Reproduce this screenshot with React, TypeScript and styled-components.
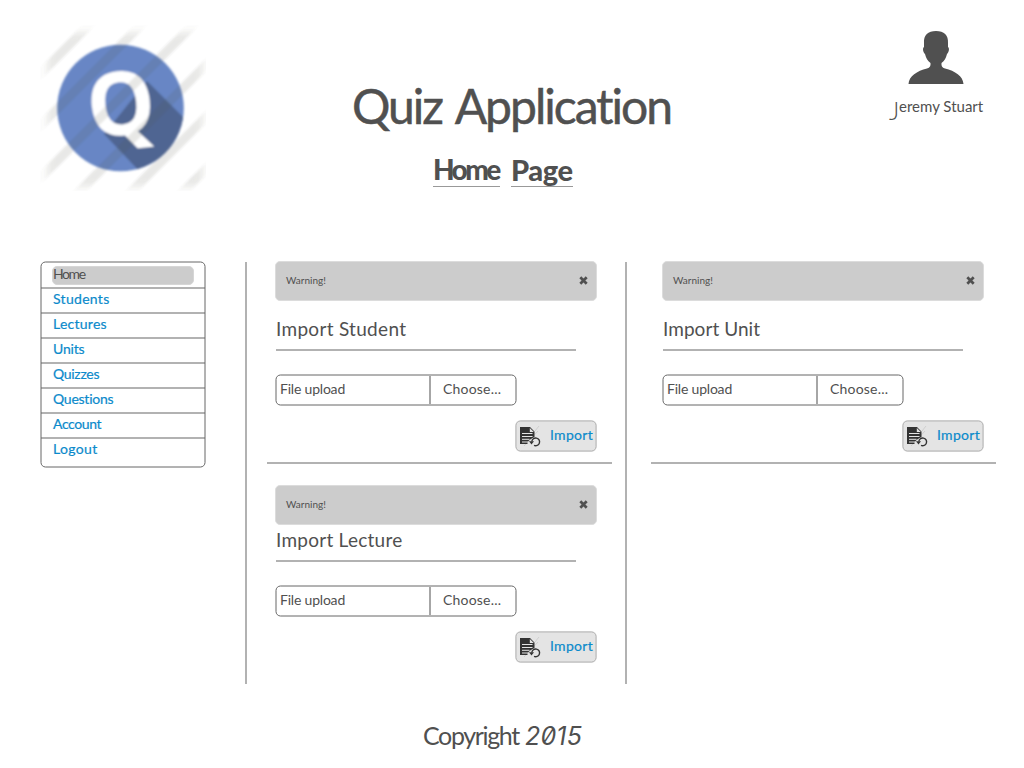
import React from 'react';
import styled, { createGlobalStyle, css } from 'styled-components';

const ink = '#505050';
const line = '#b2b2b2';
const link = '#0b8acb';

const GlobalStyle = createGlobalStyle`
  *, *::before { box-sizing: border-box; }
  body { margin: 0; background: #fff; color: ${ink}; font-family: Lato, "Open Sans", sans-serif; }
  h1, h2, h3, p, ul { margin: 0; padding: 0; font-weight: 400; }
  button { font: inherit; color: inherit; margin: 0; padding: 0; background: none; border: 0; }
`;

const hairline = (color: string) => css`
  position: relative;
  &::before {
    content: '';
    position: absolute;
    top: 0;
    left: 0;
    width: calc(100% - 1px);
    height: calc(100% - 1px);
    border: 1px solid ${color};
    border-radius: 5px;
    transform: translate(0.5px, 0.5px);
    pointer-events: none;
  }
`;

const Page = styled.div`
  width: 1024px;
  height: 768px;
  display: flex;
  flex-direction: column;
  overflow: hidden;
`;

const Header = styled.header`
  height: 261px;
  display: grid;
  grid-template-columns: 352px 1fr 134px;
  align-items: start;
`;

const LogoBox = styled.div`
  padding: 25px 0 0 40px;
  svg { display: block; }
`;

const Titles = styled.div`
  padding-top: 76px;
`;

const AppTitle = styled.h1`
  font-size: 48px;
  line-height: 60px;
  letter-spacing: -2px;
  word-spacing: 4px;
  -webkit-text-stroke: 0.5px ${ink};
  white-space: nowrap;
`;

const PageTitle = styled.h2`
  display: flex;
  gap: 11px;
  margin: 17px 0 0 81px;
  font-size: 29px;
  line-height: 33px;
  font-weight: 900;
`;

const Word = styled.span<{ $width: number; $spacing: number; $size: number }>`
  width: ${p => p.$width}px;
  height: 34px;
  font-size: ${p => p.$size}px;
  letter-spacing: ${p => p.$spacing}px;
  white-space: nowrap;
  border-bottom: 1px solid #999;
`;

const User = styled.div`
  padding: 30px 0 0;
  display: flex;
  flex-direction: column;
  svg { display: block; margin-left: 18px; }
`;

const UserName = styled.p`
  margin-top: 10px;
  height: 28px;
  display: flex;
  line-height: 24px;
  font-size: 15px;
  letter-spacing: 0;
  white-space: nowrap;
`;

const Initial = styled.span`
  width: 9px;
  margin-top: 4px;
  font-size: 25px;
  line-height: 24px;
  font-weight: 300;
  text-indent: -1px;
`;

const Main = styled.main`
  height: 423px;
  display: flex;
  padding-left: 40px;
`;

const Nav = styled.ul`
  ${hairline('#666')}
  width: 166px;
  height: 207px;
  margin-right: 39px;
  padding: 2px 1px;
  list-style: none;
`;

const NavItem = styled.li`
  height: 25px;
  padding: 0 11px 0 12px;
  border-bottom: 2px solid ${line};
  color: ${link};
  font-size: 14px;
  line-height: 20px;
  -webkit-text-stroke: 0.2px ${link};
  &:first-child { height: 26px; padding: 3px 11px 0; -webkit-text-stroke: 0; }
  &:last-child { border-bottom: 0; }
`;

const NavLabel = styled.span<{ $spacing: number }>`
  display: block;
  letter-spacing: ${p => p.$spacing}px;
`;

const Current = styled(NavLabel)`
  width: 142px;
  height: 19px;
  border: 1px solid #d6d6d6;
  border-radius: 5px;
  background: #ccc;
  color: ${ink};
  line-height: 14px;
`;

const Divider = styled.div`
  width: 2px;
  margin-top: 1px;
  background: ${line};
`;

const Column = styled.div<{ $left: number }>`
  width: 378px;
  padding-left: ${p => p.$left}px;
  flex: none;
`;

const Panel = styled.section`
  width: 322px;
`;

const Separator = styled.div<{ $shift: number }>`
  width: 345px;
  height: 2px;
  margin: 10px 0 21px -${p => p.$shift}px;
  background: ${line};
`;

const Alert = styled.div`
  height: 40px;
  display: flex;
  align-items: center;
  justify-content: space-between;
  padding: 0 8px 3px 10px;
  border: 1px solid #dcdcdc;
  border-radius: 5px;
  background: #ccc;
  font-size: 10px;
  svg { display: block; margin-top: 2px; }
`;

const PanelTitle = styled.h3<{ $height: number; $spacing: number }>`
  width: 300px;
  height: ${p => p.$height}px;
  margin-left: 1px;
  padding-bottom: 5px;
  display: flex;
  align-items: flex-end;
  border-bottom: 2px solid ${line};
  font-size: 19px;
  line-height: 30px;
  letter-spacing: ${p => p.$spacing}px;
`;

const Upload = styled.div`
  ${hairline('#666')}
  width: 242px;
  height: 32px;
  margin-top: 23px;
  padding: 2px;
  display: flex;
  font-size: 14px;
  line-height: 26px;
`;

const FileName = styled.span`
  width: 154px;
  padding-left: 3px;
  border-right: 2px solid #a6a6a6;
  letter-spacing: -0.2px;
  margin-right: 12px;
`;

const Choose = styled.span`
  letter-spacing: 0.2px;
`;

const ImportButton = styled.button`
  ${hairline('#b5b5b5')}
  width: 82px;
  height: 32px;
  margin: 14px 0 0 240px;
  padding: 0 0 0 5px;
  display: flex;
  align-items: center;
  gap: 9px;
  border-radius: 6px;
  background: #e4e4e4;
  color: ${link};
  font-size: 14px;
  line-height: 24px;
  letter-spacing: 0.3px;
  -webkit-text-stroke: 0.2px ${link};
`;

const ButtonText = styled.span`
  padding-bottom: 3px;
`;

const Footer = styled.footer`
  padding: 35px 0 0 423px;
  font-size: 25px;
  line-height: 32px;
  letter-spacing: -1.35px;
  white-space: nowrap;
`;

const Year = styled.span`
  margin-left: 1px;
  font-family: Inter, sans-serif;
  font-feature-settings: "zero" 1;
  font-style: italic;
  font-size: 25px;
  letter-spacing: 0.2px;
`;

const Logo = () => (
  <svg width="166" height="166" viewBox="40 25 166 166">
    <defs>
      <filter id="soft" x="-5%" y="-5%" width="110%" height="110%"><feGaussianBlur stdDeviation="0.8" /></filter>
      <filter id="edge" x="-10%" y="-10%" width="120%" height="120%"><feGaussianBlur stdDeviation="4" /></filter>
      <mask id="fade"><rect x="46" y="31" width="156" height="155" fill="#fff" filter="url(#edge)" /></mask>
      <clipPath id="disc"><circle cx="120.5" cy="108" r="63.3" /></clipPath>
    </defs>
    <g filter="url(#soft)">
      <circle cx="120.5" cy="108" r="63.3" fill="#6786c5" />
      <path d="M147 81 L190 124 V175 H143 L104 134Z" fill="#4f6592" clipPath="url(#disc)" />
      <text x="120.8" y="135" textAnchor="middle" fontFamily="Open Sans" fontWeight="700" fontSize="88" textLength="68" lengthAdjust="spacingAndGlyphs" fill="#fff" transform="rotate(-6 120.5 104)">Q</text>
      <g transform="translate(1 1)" stroke="#5c5c50" strokeOpacity="0.14" strokeWidth="9" mask="url(#fade)">
        <path d="M33 79 L97 15" />
        <path d="M33 131 L149 15" />
        <path d="M33 183 L201 15" />
        <path d="M73 196 L216 53" />
        <path d="M125 196 L216 105" />
        <path d="M177 196 L216 157" />
      </g>
    </g>
  </svg>
);

const Avatar = () => (
  <svg width="56" height="54" viewBox="0 0 56 54" fill="#505050">
    <path d="M28 1 C20 1 15.5 5 16 13 L16 17 C14.3 18 15 22 17 24 C18 28 19.5 31 22.5 33 C22.8 36 22 37.5 19 38.5 C9 41 1 46 .5 54 H55.5 C55 46 47 41 37 38.5 C34 37.5 33.2 36 33.5 33 C36.5 31 38 28 39 24 C41 22 41.7 18 40 17 L40 13 C40.5 5 36 1 28 1Z" />
  </svg>
);

const CloseIcon = () => (
  <svg width="9" height="9" viewBox="0 0 9 9">
    <path d="M1.3 1.3 L7.7 7.7 M7.7 1.3 L1.3 7.7" stroke="#505050" strokeWidth="2.7" />
  </svg>
);

const DocumentIcon = () => (
  <svg width="21" height="21" viewBox="0 0 21 21">
    <path d="M19 0 L15 5 M18 5 L4 20" stroke="#cfcfcf" strokeWidth="1" />
    <path d="M0 1 H10 L14.5 5.5 V11 L10 13.5 L7.5 16 V18 H0Z" fill="#333" />
    <path d="M9.8 2 V6 H13.8Z" fill="#e4e4e4" />
    <path d="M2 7.5 H12.5 M2 10.5 H12.5 M2 13.3 H9.5 M2 16 H8" stroke="#e4e4e4" strokeWidth="1" />
    <path d="M11.8 15.5 A3.9 3.9 0 1 1 14 19.4" fill="none" stroke="#333" strokeWidth="1.4" />
    <path d="M9 15.2 H14 L11.5 18.6Z" fill="#333" />
  </svg>
);

const links: [string, number][] = [
  ['Students', 0.3], ['Lectures', 0.25], ['Units', -0.2], ['Quizzes', -0.3],
  ['Questions', -0.25], ['Account', -0.4], ['Logout', 0.35],
];

const ImportPanel = ({ title, height, spacing }: { title: string; height: number; spacing: number }) => (
  <Panel>
    <Alert><span>Warning!</span><CloseIcon /></Alert>
    <PanelTitle $height={height} $spacing={spacing}>{title}</PanelTitle>
    <Upload><FileName>File upload</FileName><Choose>Choose...</Choose></Upload>
    <ImportButton><DocumentIcon /><ButtonText>Import</ButtonText></ImportButton>
  </Panel>
);

export default function App() {
  return (
    <Page>
      <GlobalStyle />
      <Header>
        <LogoBox><Logo /></LogoBox>
        <Titles>
          <AppTitle>Quiz Application</AppTitle>
          <PageTitle>
            <Word $width={67} $spacing={-2.6} $size={28}>Home</Word>
            <Word $width={62} $spacing={-0.4} $size={29}>Page</Word>
          </PageTitle>
        </Titles>
        <User>
          <Avatar />
          <UserName><Initial>J</Initial>eremy Stuart</UserName>
        </User>
      </Header>
      <Main>
        <Nav>
          <NavItem><Current $spacing={-1.4}>Home</Current></NavItem>
          {links.map(([name, spacing]) => (
            <NavItem key={name}><NavLabel $spacing={spacing}>{name}</NavLabel></NavItem>
          ))}
        </Nav>
        <Divider />
        <Column $left={28}>
          <ImportPanel title="Import Student" height={50} spacing={0.3} />
          <Separator $shift={8} />
          <ImportPanel title="Import Lecture" height={37} spacing={0.25} />
        </Column>
        <Divider />
        <Column $left={35}>
          <ImportPanel title="Import Unit" height={50} spacing={0.05} />
          <Separator $shift={11} />
        </Column>
      </Main>
      <Footer>Copyright <Year>2015</Year></Footer>
    </Page>
  );
}
